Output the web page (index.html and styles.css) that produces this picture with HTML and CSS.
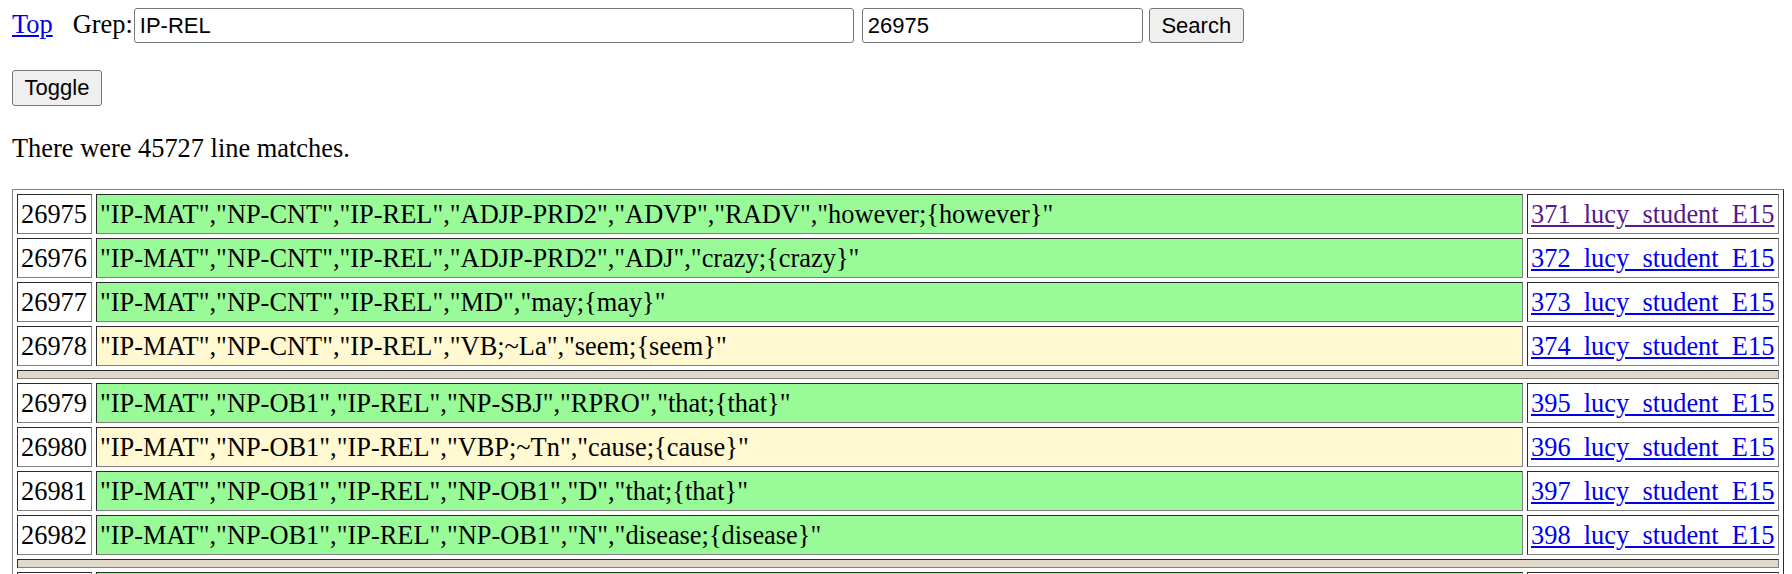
FILE: index.html
```html
<!DOCTYPE html>
<html lang="en">
<head>
<meta charset="utf-8">
<title>Grep</title>
<link rel="stylesheet" href="styles.css">
</head>
<body>
<form class="bar">
  <a class="link top-link" href="#">Top</a>
  <span class="grep-label">Grep:</span>
  <input class="field field-query" type="text" value="IP-REL">
  <input class="field field-num" type="text" value="26975">
  <button class="btn btn-search" type="button">Search</button>
</form>
<div class="tools">
  <button class="btn btn-toggle" type="button">Toggle</button>
</div>
<p class="summary">There were 45727 line matches.</p>
<table class="results">
  <colgroup>
    <col class="col-num">
    <col class="col-text">
    <col class="col-src">
  </colgroup>
  <tbody>
    <tr>
      <td class="num">26975</td>
      <td class="text hit">"IP-MAT","NP-CNT","IP-REL","ADJP-PRD2","ADVP","RADV","however;{however}"</td>
      <td class="src"><a class="link visited" href="#">371_lucy_student_E15</a></td>
    </tr>
    <tr>
      <td class="num">26976</td>
      <td class="text hit">"IP-MAT","NP-CNT","IP-REL","ADJP-PRD2","ADJ","crazy;{crazy}"</td>
      <td class="src"><a class="link" href="#">372_lucy_student_E15</a></td>
    </tr>
    <tr>
      <td class="num">26977</td>
      <td class="text hit">"IP-MAT","NP-CNT","IP-REL","MD","may;{may}"</td>
      <td class="src"><a class="link" href="#">373_lucy_student_E15</a></td>
    </tr>
    <tr>
      <td class="num">26978</td>
      <td class="text miss">"IP-MAT","NP-CNT","IP-REL","VB;~La","seem;{seem}"</td>
      <td class="src"><a class="link" href="#">374_lucy_student_E15</a></td>
    </tr>
    <tr class="sep-row"><td class="sep" colspan="3"></td></tr>
    <tr>
      <td class="num">26979</td>
      <td class="text hit">"IP-MAT","NP-OB1","IP-REL","NP-SBJ","RPRO","that;{that}"</td>
      <td class="src"><a class="link" href="#">395_lucy_student_E15</a></td>
    </tr>
    <tr>
      <td class="num">26980</td>
      <td class="text miss">"IP-MAT","NP-OB1","IP-REL","VBP;~Tn","cause;{cause}"</td>
      <td class="src"><a class="link" href="#">396_lucy_student_E15</a></td>
    </tr>
    <tr>
      <td class="num">26981</td>
      <td class="text hit">"IP-MAT","NP-OB1","IP-REL","NP-OB1","D","that;{that}"</td>
      <td class="src"><a class="link" href="#">397_lucy_student_E15</a></td>
    </tr>
    <tr>
      <td class="num">26982</td>
      <td class="text hit">"IP-MAT","NP-OB1","IP-REL","NP-OB1","N","disease;{disease}"</td>
      <td class="src"><a class="link" href="#">398_lucy_student_E15</a></td>
    </tr>
    <tr class="sep-row"><td class="sep" colspan="3"></td></tr>
    <tr>
      <td class="num">&nbsp;</td>
      <td class="text hit">&nbsp;</td>
      <td class="src">&nbsp;</td>
    </tr>
  </tbody>
</table>
</body>
</html>
```
FILE: styles.css
```css
html {
  overflow: hidden;
  background: #ffffff;
}

body {
  margin: 0;
  padding: 8px 8px 0 12px;
  font-family: "Liberation Serif", "Times New Roman", serif;
  font-size: 26.4px;
  color: #000000;
}

.link {
  color: #0000ee;
  text-decoration: underline;
}

.link.visited {
  color: #551a8b;
}

.bar {
  display: flex;
  align-items: baseline;
  height: 35px;
  margin: 0;
}

.top-link {
  margin-right: 20px;
}

.grep-label {
  margin-right: 1px;
}

.field {
  box-sizing: border-box;
  height: 35px;
  margin: 0;
  padding: 0 5px;
  border: 1px solid #767676;
  border-radius: 3px;
  background: #ffffff;
  font-family: "Liberation Sans", Arial, sans-serif;
  font-size: 22px;
  color: #000000;
}

.field-query {
  width: 720px;
}

.field-num {
  width: 281px;
  margin-left: 8px;
}

.btn {
  box-sizing: border-box;
  margin: 0;
  padding: 0;
  border: 1px solid #767676;
  border-radius: 3px;
  background: #efefef;
  font-family: "Liberation Sans", Arial, sans-serif;
  font-size: 22px;
  color: #000000;
}

.btn-search {
  width: 95px;
  height: 35px;
  margin-left: 6px;
}

.tools {
  margin-top: 27px;
  height: 36px;
}

.btn-toggle {
  width: 90px;
  height: 36px;
}

.summary {
  margin: 28px 0 0;
  height: 29px;
  line-height: 29px;
}

.results {
  box-sizing: border-box;
  width: 1772px;
  margin-top: 26px;
  table-layout: fixed;
  border: 1px outset #808080;
  border-spacing: 4px;
}

.col-num {
  width: 75px;
}

.col-src {
  width: 252px;
}

.results td {
  padding: 4px 3px;
  border: 1px inset #808080;
  line-height: 30px;
  white-space: nowrap;
  overflow: hidden;
  vertical-align: middle;
}

.results td.num {
  background: #ffffff;
}

.results td.hit {
  background: #98fb98;
}

.results td.miss {
  background: #fff8d0;
}

.results td.src {
  background: #ffffff;
}

.results td.sep {
  height: 7px;
  padding: 0;
  line-height: 0;
  font-size: 0;
  background: #e0d8c8;
}
```
